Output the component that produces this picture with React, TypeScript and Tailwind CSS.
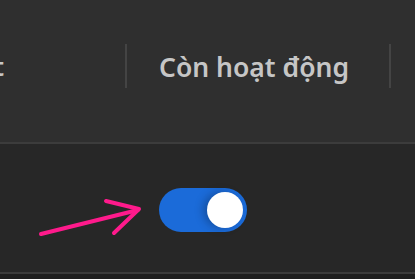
import React from 'react';

const font = { fontFamily: '"Noto Sans", "Open Sans", sans-serif' };

export default function App() {
  return (
    <div className="relative w-[415px] h-[279px] overflow-hidden bg-[#1f1f1f]" style={font}>
      {/* header row */}
      <div className="h-[142px] bg-[#2f2f2f] flex pt-[44px]">
        <div className="w-[125px] shrink-0 h-[44px] flex items-center justify-end overflow-hidden">
          <span className="mr-[121px] whitespace-nowrap text-[26px] font-semibold text-[#c6c6c6] leading-none">Cập nhật</span>
        </div>
        <div className="w-[2px] h-[44px] bg-[#444444] shrink-0" />
        <div className="w-[262px] shrink-0 h-[44px] flex items-center pl-[32px] pt-[2px]">
          <span className="whitespace-nowrap text-[26.5px] font-semibold text-[#c6c6c6] leading-none">Còn hoạt động</span>
        </div>
        <div className="w-[2px] h-[44px] bg-[#444444] shrink-0" />
      </div>
      <div className="h-[2px] bg-[#3c3c3c]" />

      {/* value row */}
      <div className="h-[128px] bg-[#272727] flex items-center pl-[159px] pt-[4px]">
        <button className="relative w-[88px] h-[44px] rounded-full bg-[#1b6bd9] flex items-center justify-end pr-[4px]">
          <span className="w-[36px] h-[36px] rounded-full bg-white shadow-[-4px_0_8px_rgba(0,0,0,0.25)]" />
        </button>
      </div>
      <div className="h-[2px] bg-[#3c3c3c]" />

      {/* annotation arrow */}
      <svg className="absolute left-0 top-0" width="415" height="279" viewBox="0 0 415 279">
        <g stroke="#ff1a8c" strokeWidth="4" strokeLinecap="round" strokeLinejoin="round" fill="none">
          <path d="M41 234 L138 210" />
          <path d="M106 201 L139 209 L114 233" />
        </g>
      </svg>
    </div>
  );
}
